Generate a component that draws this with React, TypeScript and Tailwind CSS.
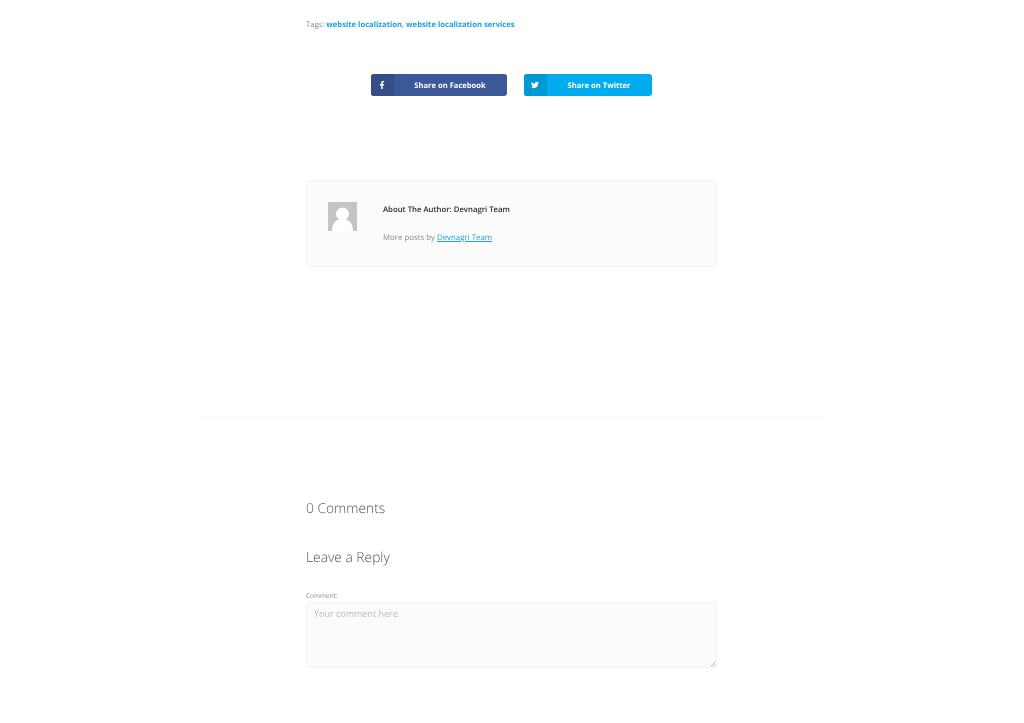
import { FaFacebookF, FaTwitter } from 'react-icons/fa'

function ShareButton({ label, icon, bg, shade, width }: { label: string; icon: React.ReactNode; bg: string; shade: string; width: string }) {
  return (
    <a className={`flex h-[22px] items-stretch overflow-hidden rounded-[3px] text-white ${bg} ${width}`}>
      <span className={`flex w-[23px] items-center justify-center pr-[1px] text-[8px] ${shade}`}>{icon}</span>
      <span className="flex flex-1 items-center justify-center pt-[3px] pr-[1px] text-[7.6px] font-bold">{label}</span>
    </a>
  )
}

export default function App() {
  return (
    <div className="h-[723px] overflow-hidden bg-white font-['Open_Sans',sans-serif] [text-rendering:geometricPrecision]">
      <div className="ml-[306px] w-[411px] pt-[19px] [will-change:transform]">
        <p className="h-[12px] text-[7.65px] leading-[12px] text-[#8a8a8a]">
          Tags: <a className="font-bold text-[#1ba1dc]">website localization</a>, <a className="font-bold text-[#1ba1dc]">website localization services</a>
        </p>
        <div className="mt-[43px] flex gap-[17px] pl-[65px]">
          <ShareButton label="Share on Facebook" icon={<FaFacebookF />} bg="bg-[#3b5998]" shade="bg-[#344e86]" width="w-[136px]" />
          <ShareButton label="Share on Twitter" icon={<FaTwitter />} bg="bg-[#00aced]" shade="bg-[#0099d3]" width="w-[128px]" />
        </div>
        <div className="mt-[84px] flex h-[87px] rounded-[3px] border border-[#f2f2f2] bg-[#fbfbfb] pl-[21px] pt-[21px]">
          <svg viewBox="0 0 29 29" className="h-[29px] w-[29px] shrink-0">
            <rect width="29" height="29" fill="#c4c4c4" />
            <circle cx="14.5" cy="12" r="6.5" fill="#fff" />
            <path d="M4 29c0-8 4-12 10.5-12S25 21 25 29z" fill="#fff" />
          </svg>
          <div className="ml-[26px]">
            <p className="mt-[2px] text-[7.75px] leading-[12px] font-semibold text-[#2b2b2b]">About The Author: Devnagri Team</p>
            <p className="mt-[16px] text-[7.85px] leading-[12px] text-[#8a8a8a]">
              More posts by <a className="text-[#1ba1dc] underline">Devnagri Team</a>
            </p>
          </div>
        </div>
      </div>
      <div className="mx-auto mt-[150px] h-px w-[624px] bg-[#f6f6f6]" />
      <div className="ml-[306px] w-[411px] [will-change:transform]">
        <h3 className="mt-[81px] text-[13.8px] leading-[20px] font-light text-[#555]">0 Comments</h3>
        <h3 className="mt-[29px] text-[13.8px] leading-[20px] font-light text-[#555]">Leave a Reply</h3>
        <label className="mt-[23px] block text-[6.5px] leading-[10px] text-[#8a8a8a]">Comment:</label>
        <div className="relative mt-[1px]">
          <textarea
            placeholder="Your comment here"
            className="block h-[66px] w-full resize-none rounded-[3px] border border-[#f2f2f2] bg-[#fbfbfb] px-[7px] py-[4px] text-[9px] leading-[14px] placeholder:text-[#bbb]"
          />
          <svg viewBox="0 0 6 6" className="absolute right-[1px] bottom-[1px] h-[6px] w-[6px]">
            <path d="M0.5 5.5L5.5 0.5M3 5.5L5.5 3" stroke="#aaa" strokeWidth="0.8" fill="none" />
          </svg>
        </div>
      </div>
    </div>
  )
}
